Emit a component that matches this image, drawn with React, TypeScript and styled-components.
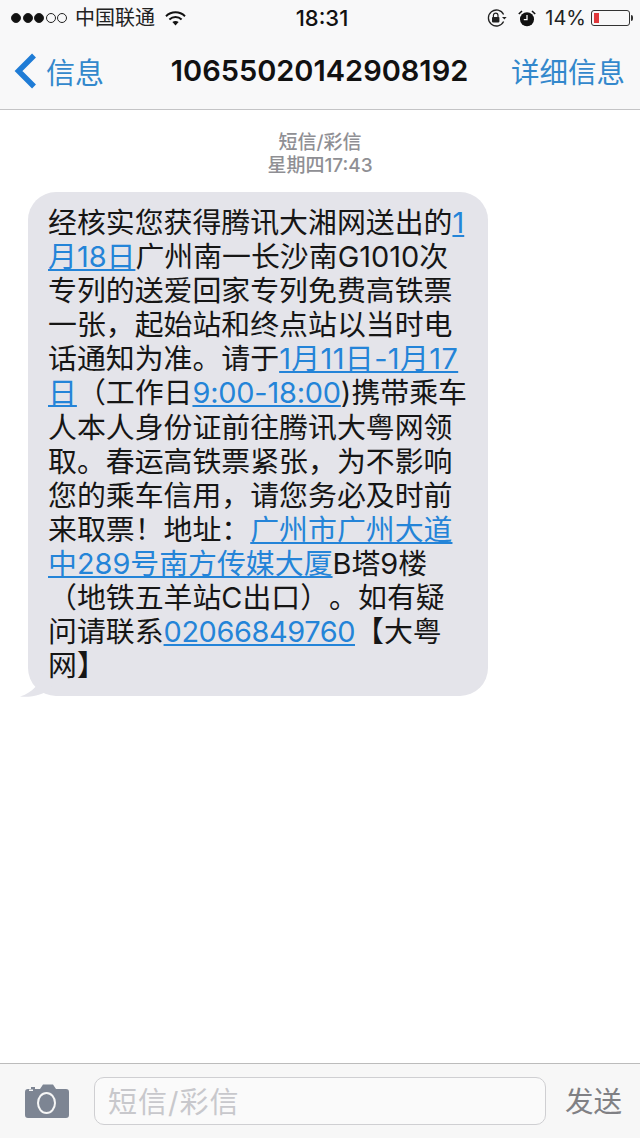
import styled, { createGlobalStyle } from "styled-components"

const FONT = `Inter, "Noto Sans CJK SC", sans-serif`

const GlobalStyle = createGlobalStyle`
  html, body {
    margin: 0;
    padding: 0;
    background: #fff;
  }
  body {
    font-family: ${FONT};
    text-spacing-trim: space-all;
  }
`

const App = () => {
  return (
    <Page>
      <GlobalStyle />
      <Header>
        <StatusBar>
          <StatusLeft>
            <Signal>
              <Dot filled />
              <Dot filled />
              <Dot filled />
              <Dot />
              <Dot />
            </Signal>
            <Carrier>中国联通</Carrier>
            <svg width="21" height="15" viewBox="0 0 21 15">
              <path d="M1 5.2C6.4 0 14.6 0 20 5.2" fill="none" stroke="#111" strokeWidth="2" />
              <path d="M4.4 8.4c3.5-3.2 8.7-3.2 12.2 0" fill="none" stroke="#111" strokeWidth="2" />
              <path d="M7.4 11c1.9-1.4 4.3-1.4 6.2 0l-3.1 3.4z" fill="#111" />
            </svg>
          </StatusLeft>
          <Clock>18:31</Clock>
          <StatusRight>
            <svg width="21" height="20" viewBox="0 0 21 20">
              <path d="M17.6 13.5A8 8 0 1 1 17.6 6.5" fill="none" stroke="#222" strokeWidth="1.3" />
              <path d="M16 9l2.4 2.4L20.6 9z" fill="#222" />
              <rect x="6" y="9" width="7.4" height="5.4" rx="0.8" fill="#222" />
              <path d="M7.4 9V7.4a2.3 2.3 0 0 1 4.6 0V9" fill="none" stroke="#222" strokeWidth="1.2" />
            </svg>
            <AlarmIcon width="18" height="17" viewBox="0 0 18 17">
              <circle cx="9" cy="9.3" r="7" fill="#111" />
              <path d="M9 5v4.6H5.8" fill="none" stroke="#fff" strokeWidth="1.3" />
              <path d="M0.8 4L4 1M17.2 4L14 1" stroke="#111" strokeWidth="1.6" />
            </AlarmIcon>
            <Percent>14%</Percent>
            <Battery>
              <BatteryLevel />
            </Battery>
            <BatteryTip />
          </StatusRight>
        </StatusBar>
        <NavBar>
          <BackLink>
            <svg width="24" height="36" viewBox="0 0 24 36">
              <path d="M20 2.5L4.5 18 20 33.5" fill="none" stroke="#1f7cd6" strokeWidth="5.5" />
            </svg>
            <span>信息</span>
          </BackLink>
          <Title>10655020142908192</Title>
          <Details>详细信息</Details>
        </NavBar>
      </Header>

      <Thread>
        <Stamp>
          <div>短信/彩信</div>
          <div>星期四17:43</div>
        </Stamp>
        <Bubble>
          <Tail width="34" height="24" viewBox="0 0 34 24">
            <path d="M24 0C23 10 14 20 2 23.6 14 24.6 26 22 34 14z" fill="#e4e4ea" />
          </Tail>
          <Line>经核实您获得腾讯大湘网送出的<Link>1</Link></Line>
          <Line><Link>月18日</Link>广州南一长沙南G1010次</Line>
          <Line>专列的送爱回家专列免费高铁票</Line>
          <Line>一张，起始站和终点站以当时电</Line>
          <Line>话通知为准。请于<Link spacing={0.4}>1月11日-1月17</Link></Line>
          <Line><Link>日</Link>（工作日<Link spacing={-0.2}>9:00-18:00</Link>)携带乘车</Line>
          <Line>人本人身份证前往腾讯大粤网领</Line>
          <Line>取。春运高铁票紧张，为不影响</Line>
          <Line>您的乘车信用，请您务必及时前</Line>
          <Line>来取票！地址：<Link>广州市广州大道</Link></Line>
          <Line><Link>中289号南方传媒大厦</Link>B塔9楼</Line>
          <Line>（地铁五羊站C出口）。如有疑</Line>
          <Line>问请联系<Link spacing={-0.4}>02066849760</Link>【大粤</Line>
          <Line>网】</Line>
        </Bubble>
      </Thread>

      <Composer>
        <svg width="44" height="34" viewBox="0 0 44 34">
          <path
            d="M3 5h3V3h4v2h5l3-4.500h10L31 5h10a3 3 0 0 1 3 3v23a3 3 0 0 1-3 3H3a3 3 0 0 1-3-3V8a3 3 0 0 1 3-3z"
            fill="#7d8593"
          />
          <ellipse cx="21.500" cy="19" rx="8.500" ry="10" fill="none" stroke="#f6f6f6" strokeWidth="2" />
          <rect x="4" y="5.500" width="4" height="1.500" fill="#f6f6f6" />
        </svg>
        <Input>短信/彩信</Input>
        <Send>发送</Send>
      </Composer>
    </Page>
  )
}

export default App

const Page = styled.div`
  width: 640px;
  height: 1138px;
  display: flex;
  flex-direction: column;
  background: #fff;
  overflow: hidden;
  font-family: ${FONT};
`
const Header = styled.header`
  height: 110px;
  box-sizing: border-box;
  flex: none;
  background: #f8f8f9;
  border-bottom: 1px solid #c4c4c6;
`
const StatusBar = styled.div`
  height: 36px;
  padding: 0 7px 0 11px;
  display: grid;
  grid-template-columns: 1fr auto 1fr;
  align-items: center;
  color: #111;
`
const StatusLeft = styled.div`
  display: flex;
  align-items: center;
`
const Signal = styled.div`
  display: flex;
  gap: 1.500px;
  margin-right: 8px;
`
const Dot = styled.span<{ filled?: boolean }>`
  width: 10px;
  height: 10px;
  box-sizing: border-box;
  border-radius: 50%;
  border: 1px solid #222;
  background: ${(p) => (p.filled ? "#111" : "transparent")};
`
const Carrier = styled.span`
  font-size: 20px;
  line-height: 24px;
  letter-spacing: 0;
  margin-right: 10px;
  color: #222;
`
const Clock = styled.span`
  font-size: 22px;
  line-height: 24px;
  font-weight: 500;
`
const StatusRight = styled.div`
  display: flex;
  align-items: center;
  justify-content: flex-end;
`
const AlarmIcon = styled.svg`
  margin-left: 11px;
`
const Percent = styled.span`
  font-size: 20px;
  line-height: 24px;
  margin-left: 9px;
  margin-right: 5px;
  color: #222;
`
const Battery = styled.div`
  width: 39px;
  height: 16px;
  box-sizing: border-box;
  padding: 2px;
  border: 1px solid #333;
  border-radius: 3px;
  display: flex;
`
const BatteryLevel = styled.div`
  width: 5px;
  background: #e0383c;
`
const BatteryTip = styled.div`
  width: 2px;
  height: 6px;
  margin-left: 1px;
  border-radius: 0 2px 2px 0;
  background: #333;
`
const NavBar = styled.div`
  height: 69px;
  padding: 0 15px 0 14px;
  display: grid;
  grid-template-columns: 1fr auto 1fr;
  align-items: center;
`
const BackLink = styled.div`
  display: flex;
  align-items: center;
  gap: 8px;
  font-size: 29px;
  color: #3388cc;
`
const Title = styled.div`
  font-size: 29px;
  font-weight: 600;
  color: #111;
  white-space: nowrap;
`
const Details = styled.div`
  justify-self: end;
  font-size: 28.500px;
  color: #3388cc;
  white-space: nowrap;
`
const Thread = styled.main`
  flex: 1;
  min-height: 0;
  padding-top: 21px;
`
const Stamp = styled.div`
  font-size: 19px;
  line-height: 23px;
  font-weight: 500;
  text-align: center;
  color: #8f8f94;
  margin-bottom: 15px;
`
const Bubble = styled.div`
  position: relative;
  width: 460px;
  height: 504px;
  box-sizing: border-box;
  margin-left: 28px;
  padding: 14px 0 0 20px;
  background: #e4e4ea;
  border-radius: 28px;
`
const Tail = styled.svg`
  position: absolute;
  left: -10px;
  bottom: -0.500px;
`
const Line = styled.div`
  position: relative;
  font-size: 28.900px;
  line-height: 34.100px;
  color: #161616;
  white-space: nowrap;
`
const Link = styled.span<{ spacing?: number }>`
  color: #2484d8;
  letter-spacing: ${(p) => p.spacing ?? 0}px;
  text-decoration: underline;
  text-decoration-thickness: 2px;
  text-underline-offset: 2px;
`
const Composer = styled.footer`
  height: 75px;
  flex: none;
  box-sizing: border-box;
  padding: 0 18px 0 25px;
  display: flex;
  align-items: center;
  background: #f7f7f7;
  border-top: 1px solid #bcbcbc;
`
const Input = styled.div`
  width: 452px;
  height: 48px;
  box-sizing: border-box;
  margin-left: 25px;
  padding: 0 0 3px 13px;
  display: flex;
  align-items: center;
  font-size: 29px;
  letter-spacing: 1px;
  color: #c8c8cc;
  background: #fafafa;
  border: 1px solid #cfcfd2;
  border-radius: 10px;
`
const Send = styled.div`
  margin-left: 19px;
  padding-bottom: 3px;
  font-size: 28.500px;
  color: #808084;
  white-space: nowrap;
`
